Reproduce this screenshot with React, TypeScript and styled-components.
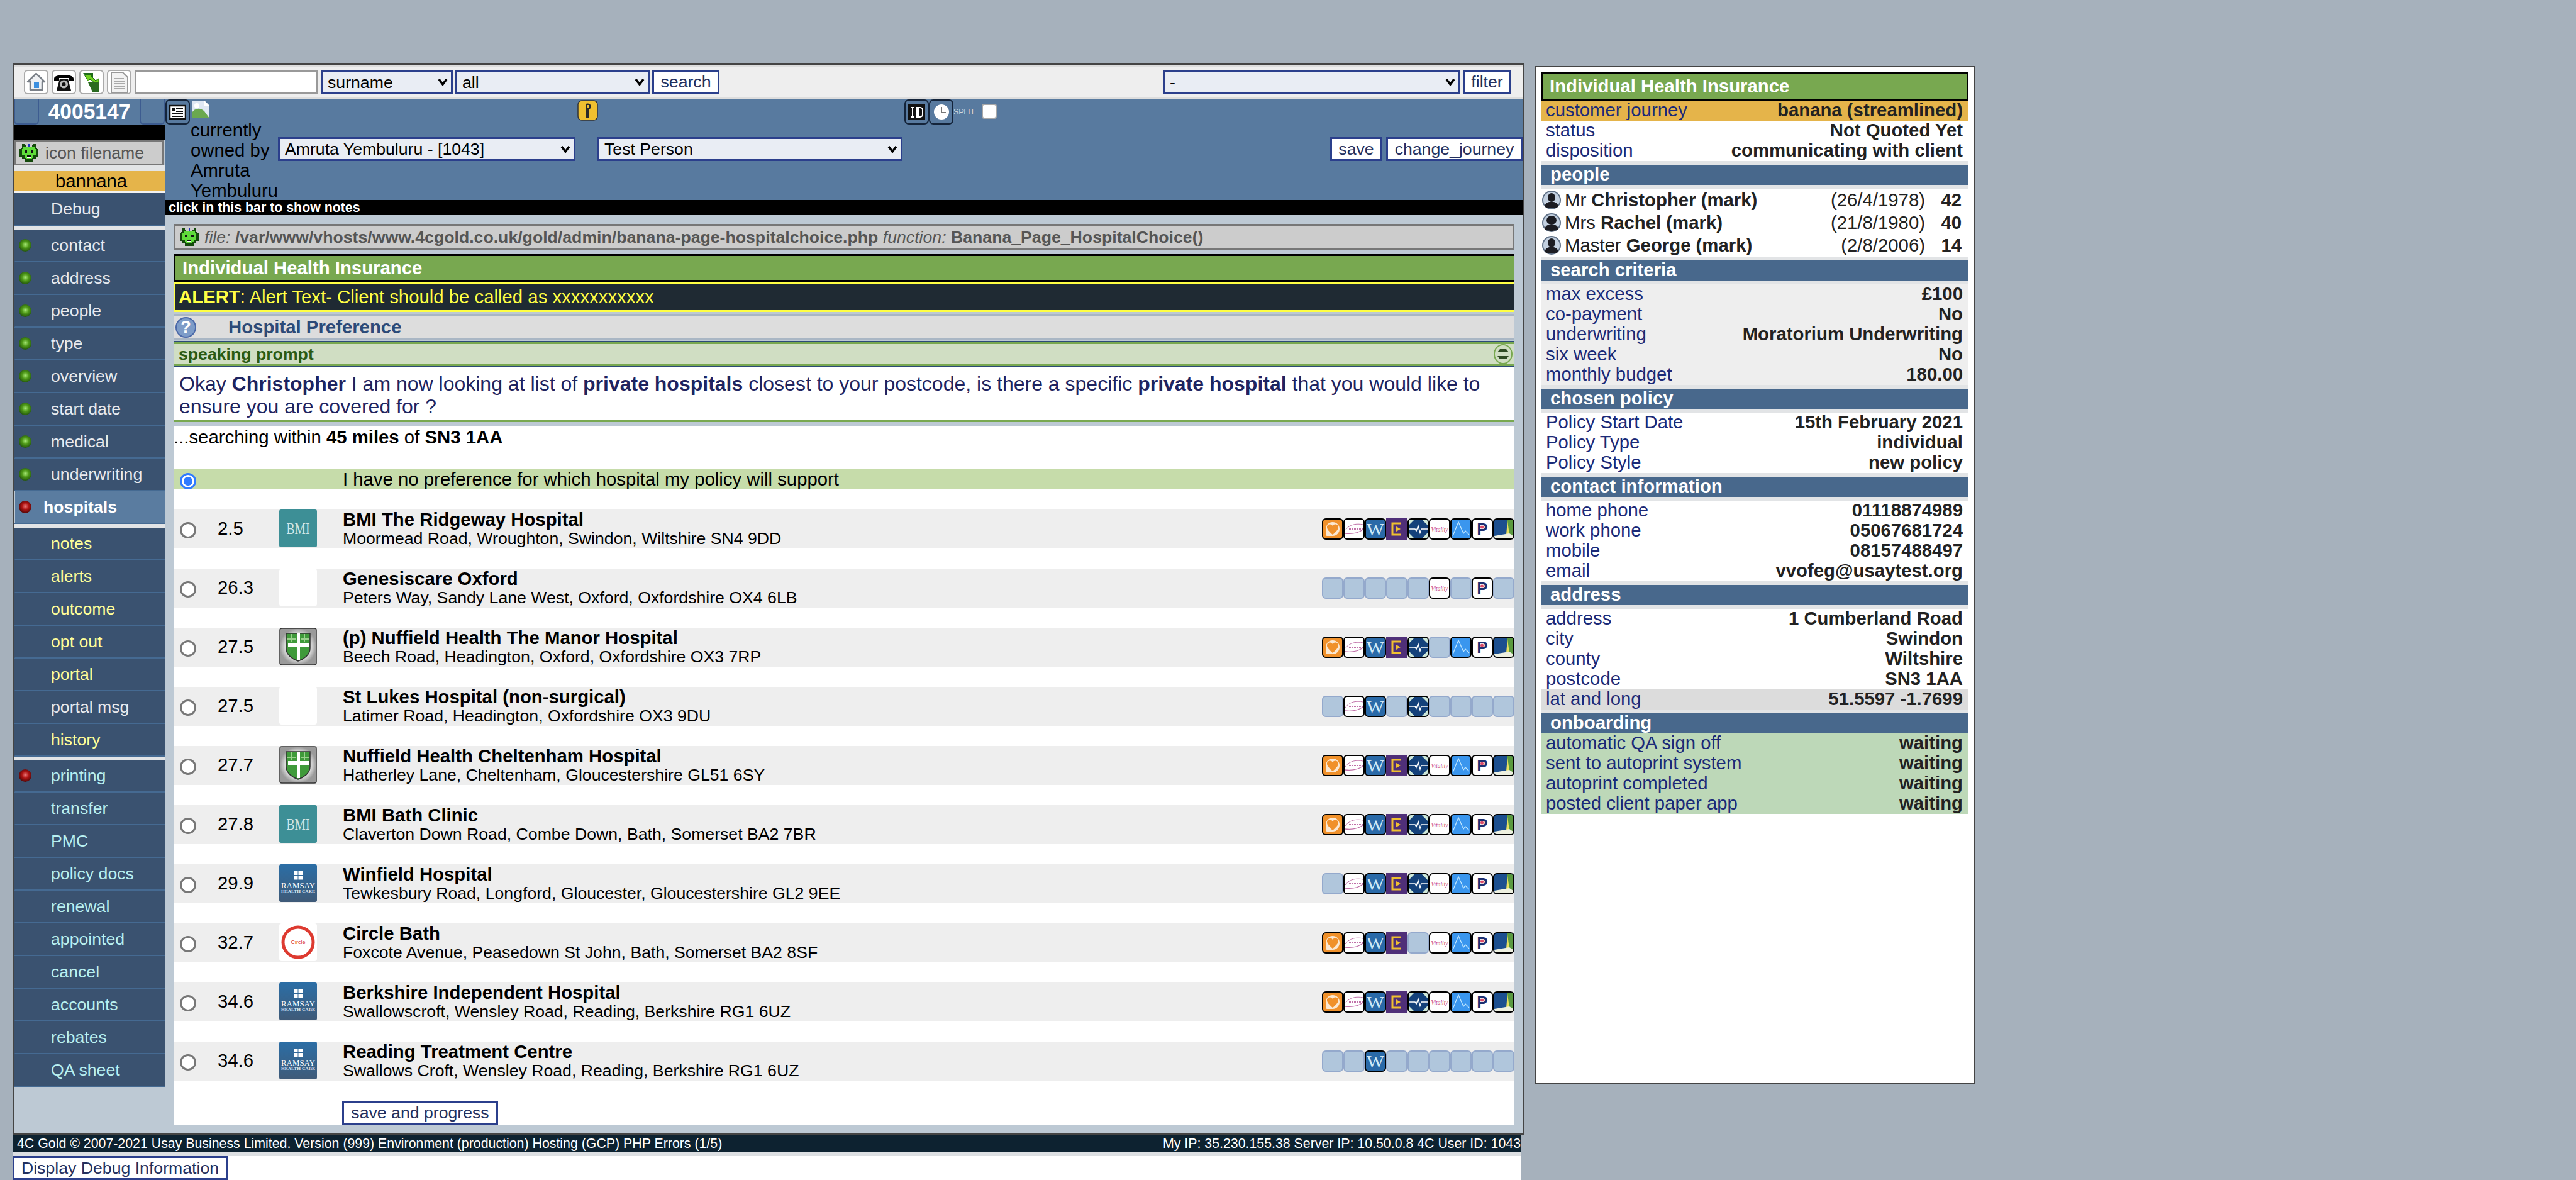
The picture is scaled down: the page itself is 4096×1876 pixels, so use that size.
import * as React from 'react';
import styled, { createGlobalStyle } from 'styled-components';

const palette = {
  page: '#a6b1bc',
  shell: '#bdc9d4',
  band: '#587a9f',
  nav: '#3a5270',
  navLine: '#456a92',
  navy: '#2b3f8c',
  label: '#1b2a78',
  green: '#78a850',
  orange: '#e5b44a',
  stripe: '#e2e4e6',
  head: '#48688c',
};

const chevron =
  "url(\"data:image/svg+xml,%3Csvg xmlns='http://www.w3.org/2000/svg' width='16' height='13'%3E%3Cpath d='M2 2l6 8 6-8' fill='none' stroke='%23000' stroke-width='3.5'/%3E%3C/svg%3E\")";

const GlobalStyle = createGlobalStyle`
  html, body {
    margin: 0;
    padding: 0;
    width: 4096px;
    height: 1876px;
    overflow: hidden;
    background: ${palette.page};
    font-family: "Liberation Sans", Arial, sans-serif;
    font-size: 26.67px;
    color: #000;
  }
  * {
    box-sizing: border-box;
  }
`;

const Page = styled.div`
  display: flex;
  align-items: flex-start;
  width: 4096px;
  height: 1876px;
`;

const MainColumn = styled.div`
  width: 2404px;
  margin-left: 20px;
  padding-top: 100px;
`;

const Shell = styled.div`
  height: 1704px;
  display: flex;
  flex-direction: column;
  background: ${palette.shell};
  border: 2px solid #444;
  border-top-width: 3px;
`;

const Toolbar = styled.div`
  flex: none;
  height: 55px;
  display: flex;
  align-items: center;
  gap: 4px;
  padding: 0 19px 0 16px;
  background: #eee;
  border-top: 4px solid #ddd;
  border-bottom: 4px solid #ddd;
`;

const ToolIcons = styled.div`
  display: flex;
  gap: 5px;
  margin-right: 1px;
`;

const ToolIcon = styled.div`
  width: 39px;
  height: 39px;
  background: #fff;
  border: 2px solid #aaa;
  border-radius: 6px;
  display: flex;
  align-items: center;
  justify-content: center;
`;

const SearchInput = styled.input`
  width: 292px;
  height: 38px;
  background: #fff;
  border: 3px solid #999;
  border-radius: 0;
  outline: none;
`;

const Select = styled.select<{ $width: number }>`
  appearance: none;
  width: ${(p) => p.$width}px;
  height: 38px;
  padding: 0 28px 0 8px;
  font-family: inherit;
  font-size: 26.67px;
  color: #000;
  background: #e9edf4 ${chevron} no-repeat right 5px center;
  border: 3px solid ${palette.navy};
  border-radius: 0;
`;

const Button = styled.button<{ $width: number }>`
  width: ${(p) => p.$width}px;
  height: 38px;
  padding: 0;
  font-family: inherit;
  font-size: 26.67px;
  color: #24305e;
  background: #fff;
  border: 3px solid ${palette.navy};
  border-radius: 0;
`;

const Spacer = styled.div`
  flex: 1;
`;

const Body = styled.div`
  flex: 1;
  display: flex;
  min-height: 0;
`;

const Sidebar = styled.div`
  flex: none;
  width: 240px;
`;

const IdBlock = styled.div`
  height: 40px;
  display: flex;
  align-items: stretch;
  justify-content: space-between;
  background: ${palette.band};
`;

const IdTab = styled.div`
  width: 40px;
  border: 2px solid #3d5c90;
  border-top: 0;
  border-radius: 0 0 6px 6px;
`;

const IdNumber = styled.div`
  align-self: center;
  font-size: 33.6px;
  font-weight: bold;
  line-height: 40px;
  color: #fff;
`;

const BlackStrip = styled.div`
  height: 25px;
  background: #000;
`;

const FilenameBox = styled.div`
  height: 40px;
  margin: 0 1px;
  display: flex;
  align-items: center;
  gap: 9px;
  padding-left: 3px;
  color: #555;
  background: #ccc;
  border: 3px solid #777;
`;

const JourneyBlock = styled.div`
  margin-top: 0;
  border-top: 9px solid ${palette.stripe};
  border-bottom: 3px solid #f2f2f2;
`;

const JourneyName = styled.div`
  height: 32px;
  line-height: 32px;
  padding-left: 66px;
  font-size: 29.33px;
  background: ${palette.orange};
`;

const NavGroup = styled.div<{ $gap: number }>`
  border-bottom: ${(p) => p.$gap}px solid ${palette.stripe};
`;

const NavItem = styled.div<{ $active?: boolean; $color?: string }>`
  height: 52px;
  display: flex;
  align-items: center;
  background: ${(p) => (p.$active ? '#5a7ca0' : palette.nav)};
  border-bottom: 2px solid ${palette.navLine};
  border-left: 2px solid ${(p) => (p.$active ? palette.shell : palette.nav)};
  color: ${(p) => p.$color || '#e8eaee'};
  font-weight: ${(p) => (p.$active ? 'bold' : 'normal')};
`;

const LedSlot = styled.div`
  flex: none;
  width: 20px;
  height: 20px;
  margin-left: 6px;
`;

const Led = styled.div<{ $on: 'green' | 'red' }>`
  width: 20px;
  height: 20px;
  border-radius: 50%;
  background: ${(p) =>
    p.$on === 'green'
      ? 'radial-gradient(circle at 52% 45%, #a8e878 0, #4f9a18 35%, #2c6410 65%, #0e2206 95%)'
      : 'radial-gradient(circle at 52% 45%, #e87878 0, #b01414 35%, #640a0a 65%, #220404 95%)'};
`;

const NavLabel = styled.span<{ $active?: boolean }>`
  margin-left: ${(p) => (p.$active ? 19 : 31)}px;
  line-height: 1;
`;

const MainArea = styled.div`
  flex: 1;
  min-width: 0;
  display: flex;
  flex-direction: column;
`;

const Header = styled.div`
  flex: none;
  height: 160px;
  background: ${palette.band};
  font-size: 29.33px;
`;

const HeaderIcons = styled.div`
  height: 33px;
  display: flex;
  align-items: flex-start;
  padding-left: 1px;
`;

const DarkTile = styled.div<{ $gap?: number }>`
  flex: none;
  width: 39px;
  height: 40px;
  margin-left: ${(p) => p.$gap || 0}px;
  display: flex;
  align-items: center;
  justify-content: center;
  border: 2px solid #14243a;
  border-radius: 7px;
`;

const BrokenImage = styled.svg`
  flex: none;
  margin: 1px 0 0 2px;
`;

const KeyIcon = styled.svg`
  flex: none;
  margin: 1px 0 0 584px;
`;

const SplitLabel = styled.span`
  flex: none;
  width: 35px;
  margin-top: 12px;
  font-size: 13px;
  line-height: 16px;
  color: #d8d8d8;
  letter-spacing: -0.5px;
`;

const SplitCheck = styled.input`
  appearance: none;
  flex: none;
  width: 24px;
  height: 24px;
  margin: 7px 0 0 10px;
  background: #fff;
  border: 2px solid #a8a8a8;
  border-radius: 4px;
`;

const HeaderForm = styled.div`
  display: flex;
  align-items: flex-start;
  padding: 0 1px 0 41px;
`;

const OwnedBy = styled.div`
  flex: none;
  width: 139px;
  line-height: 32px;
`;

const FormControls = styled.div`
  flex: 1;
  display: flex;
  gap: 35px;
  margin-top: 27px;
`;

const FormActions = styled.div`
  display: flex;
  gap: 6px;
  margin-left: auto;
`;

const NotesBar = styled.div`
  flex: none;
  height: 24px;
  padding-left: 6px;
  line-height: 24px;
  font-size: 21.33px;
  font-weight: bold;
  color: #fff;
  background: #000;
`;

const Content = styled.div`
  flex: 1;
  min-height: 0;
  display: flex;
  flex-direction: column;
  padding: 14px 14px 14px;
`;

const FileBar = styled.div`
  flex: none;
  height: 42px;
  display: flex;
  align-items: center;
  gap: 7px;
  padding-left: 5px;
  margin-bottom: 6px;
  color: #555;
  background: #ccc;
  border: 3px solid #777;
  em {
    font-weight: normal;
  }
  span {
    font-weight: bold;
  }
`;

const TitleBar = styled.div`
  flex: none;
  height: 44px;
  line-height: 38px;
  padding-left: 12px;
  font-size: 29.33px;
  font-weight: bold;
  color: #fff;
  background: ${palette.green};
  border: 3px solid #000;
  border-left-width: 2px;
  border-right-width: 1px;
`;

const AlertBar = styled.div`
  flex: none;
  height: 48px;
  line-height: 42px;
  padding-left: 5px;
  margin-bottom: 4px;
  font-size: 29.33px;
  color: #ffff44;
  background: #1f2a33;
  border: 3px solid #ffff44;
  border-right-width: 1px;
`;

const PrefBar = styled.div`
  flex: none;
  height: 40px;
  display: flex;
  align-items: center;
  margin-bottom: 2px;
  font-size: 29.33px;
  font-weight: bold;
  color: #2c4a78;
  background: #ddd;
  border-top: 2px solid #a9b6c4;
  border-bottom: 2px solid #a9b6c4;
`;

const HelpBadge = styled.div`
  flex: none;
  width: 33px;
  height: 33px;
  margin: 0 51px 0 3px;
  display: flex;
  align-items: center;
  justify-content: center;
  font-size: 27px;
  font-weight: bold;
  line-height: 1;
  color: #fff;
  background: #7d9cc8;
  border: 2px solid #4a68a8;
  border-radius: 50%;
`;

const SpeakBar = styled.div`
  flex: none;
  height: 42px;
  display: flex;
  align-items: center;
  justify-content: space-between;
  padding: 0 2px 0 8px;
  font-weight: bold;
  color: #2a5a12;
  background: #d0dec3;
  box-shadow: inset 0 2px 0 #2c4a78, inset 0 5px 0 ${palette.green},
    inset 0 -2px 0 #2c4a78, inset 0 -5px 0 ${palette.green};
`;

const PromptBox = styled.div`
  flex: none;
  height: 87px;
  padding: 8px 8px 0;
  font-size: 32px;
  line-height: 36px;
  color: #1f2460;
  background: #fff;
  border: 1px solid ${palette.green};
  border-top: 0;
  border-bottom-width: 3px;
`;

const ResultsPanel = styled.div`
  flex: 1;
  min-height: 0;
  margin-top: 6px;
  display: flex;
  flex-direction: column;
  background: #fff;
  font-size: 29.33px;
`;

const SearchNote = styled.div`
  height: 36px;
  line-height: 36px;
  margin-bottom: 33px;
`;

const ChoiceGrid = styled.div`
  display: grid;
  grid-template-columns: 70px 98px 60px 41px minmax(0, 1fr) auto;
`;

const NoPreference = styled(ChoiceGrid)`
  height: 32px;
  line-height: 32px;
  margin-bottom: 32px;
  background: #c6dcaa;
`;

const HospitalList = styled.div`
  display: flex;
  flex-direction: column;
  gap: 32px;
`;

const HospitalRow = styled(ChoiceGrid)`
  height: 62px;
  background: #eee;
`;

const Radio = styled.input`
  appearance: none;
  width: 26px;
  height: 26px;
  margin: 20px 0 0 10px;
  background: #fff;
  border: 3px solid #777;
  border-radius: 50%;
  &:checked {
    background: radial-gradient(circle, #2f7bff 0 6.5px, #fff 7.5px);
    border-color: #2f7bff;
  }
`;

const NoPrefRadio = styled(Radio)`
  margin-top: 6px;
`;

const Distance = styled.div`
  line-height: 60px;
`;

const NoPrefLabel = styled.div`
  grid-column: 5;
`;

const HospitalText = styled.div`
  grid-column: 5;
  line-height: 31px;
  b {
    display: block;
    white-space: nowrap;
  }
  span {
    display: block;
    font-size: 26.67px;
    white-space: nowrap;
  }
`;

const LogoBox = styled.svg`
  display: block;
  grid-column: 3;
`;

const Providers = styled.div`
  grid-column: 6;
  display: flex;
  align-items: center;
`;

const Tile = styled.div<{ $bg: string; $off?: boolean; $square?: boolean }>`
  width: 34px;
  height: 34px;
  overflow: hidden;
  background: ${(p) => (p.$off ? '#b0c6dc' : p.$bg)};
  border: ${(p) => (p.$square ? '0' : `2px solid ${p.$off ? '#94a9cc' : '#000'}`)};
  border-radius: ${(p) => (p.$square ? '0' : '6px')};
  svg {
    display: block;
    width: 100%;
    height: 100%;
  }
`;

const ProgressWrap = styled.div`
  margin: 32px 0 0 268px;
`;

const ProgressButton = styled(Button)`
  display: block;
`;

const BottomArea = styled.div`
  width: 2399px;
  height: 72px;
  background: #fff;
`;

const Footer = styled.div`
  height: 28px;
  display: flex;
  justify-content: space-between;
  padding: 0 1px 0 7px;
  font-size: 21.33px;
  line-height: 28px;
  color: #fff;
  background: #0d2230;
`;

const FooterEdge = styled.div`
  height: 6px;
  background: #dcdfe2;
`;

const DebugButton = styled(Button)`
  display: block;
  height: 38px;
`;

const SidePanel = styled.div`
  flex: none;
  width: 700px;
  height: 1619px;
  margin: 105px 0 0 16px;
  padding: 8px;
  background: #fff;
  border: 2px solid #444;
  font-size: 29.33px;
`;

const SideTitle = styled.div`
  height: 45px;
  line-height: 38px;
  padding-left: 11px;
  font-weight: bold;
  color: #fff;
  background: ${palette.green};
  border: 3px solid #000;
`;

const InfoRow = styled.div<{ $bg?: string }>`
  height: 32px;
  display: flex;
  justify-content: space-between;
  padding: 0 9px 0 8px;
  line-height: 30px;
  color: ${palette.label};
  background: ${(p) => p.$bg || 'transparent'};
  b {
    color: #222;
  }
`;

const SectionHead = styled.div`
  height: 44px;
  line-height: 30px;
  padding-left: 15px;
  font-weight: bold;
  color: #fff;
  background: ${palette.head};
  border-top: 6px solid ${palette.stripe};
  border-bottom: 6px solid ${palette.stripe};
`;

const OnboardingHead = styled(SectionHead)`
  height: 38px;
  border-bottom: 0;
`;

const RowGroup = styled.div<{ $bg: string }>`
  background: ${(p) => p.$bg};
`;

const PersonRow = styled.div`
  height: 36px;
  display: grid;
  grid-template-columns: 32px minmax(0, 1fr) auto 58px;
  align-items: center;
  padding: 0 11px 0 2px;
  color: #222;
`;

const PersonAge = styled.b`
  text-align: right;
`;

const PersonName = styled.span`
  margin-left: 4px;
`;

const Alien: React.FC = () => (
  <svg width="34" height="28" viewBox="0 0 17 14" shapeRendering="crispEdges">
    <path
      fill="#144a0c"
      d="M3 0h2v1h1v1h5V1h1V0h2v3h1v1h1v6h-2v2h-2v2H5v-2H3v-2H1V4h1V3h1z"
    />
    <path fill="#5fdc3a" d="M4 2h9v2h1v5h-2v2h-1v1H6v-1H5V9H3V4h1z" />
    <path fill="#111" d="M5 5h2v2H5zM10 5h2v2h-2zM7 9h3v2H7z" />
    <path fill="#fff" d="M7 10h3v1H7z" />
    <path fill="#2233bb" d="M8 0h1v2H8z" />
  </svg>
);

const HomeIcon: React.FC = () => (
  <svg width="33" height="33" viewBox="0 0 33 33">
    <path d="M16.5 3 3 16h4v13h19V16h4z" fill="#eef0f3" stroke="#7a8088" strokeWidth="2.5" strokeLinejoin="round" />
    <rect x="13" y="16" width="8" height="10" fill="#3b8fe0" />
  </svg>
);

const PhoneIcon: React.FC = () => (
  <svg width="35" height="33" viewBox="0 0 35 33">
    <path d="M2 11c0-8 31-8 31 0v3h-8v-4H10v4H2z" fill="#000" />
    <path d="M11 11h13l5 19H6z" fill="#111" />
    <circle cx="17.5" cy="20" r="6.5" fill="#bbb" />
    <circle cx="17.5" cy="20" r="3" fill="#111" />
  </svg>
);

const ReturnIcon: React.FC = () => (
  <svg width="33" height="35" viewBox="0 0 33 35">
    <path d="M3 3h16v11h-6z" fill="#1f6a1a" />
    <path d="M5 6h9l9 9 5-3v10H17l4-4-7-5-3 3z" fill="#6fd020" stroke="#1f6a1a" />
    <path d="M11 18h17v15H18z" fill="#2a6a20" />
  </svg>
);

const PageIcon: React.FC = () => (
  <svg width="31" height="34" viewBox="0 0 31 34">
    <path d="M3 1h18l8 8v24H3z" fill="#f2f2f2" stroke="#999" strokeWidth="2" />
    <path d="M7 11h16M7 15h18M7 19h18M7 23h18M7 27h18" stroke="#aaa" strokeWidth="2" />
  </svg>
);

const CardIcon: React.FC = () => (
  <svg width="27" height="27" viewBox="0 0 27 27">
    <rect x="1" y="3" width="25" height="21" fill="#fff" stroke="#111" strokeWidth="2.5" />
    <rect x="5" y="7" width="4" height="4" fill="#111" />
    <path d="M11 8h11M11 12h11M5 16h17M5 20h17" stroke="#111" strokeWidth="2" />
  </svg>
);

const IdIcon: React.FC = () => (
  <svg width="27" height="25" viewBox="0 0 27 25">
    <rect width="27" height="25" fill="#111" />
    <path d="M4 5h6M7 5v15M4 20h6M14 5h5a4 4 0 0 1 4 4v7a4 4 0 0 1-4 4h-5zM16 5v15" fill="none" stroke="#fff" strokeWidth="2" />
  </svg>
);

const ClockIcon: React.FC = () => (
  <svg width="26" height="26" viewBox="0 0 26 26">
    <circle cx="13" cy="13" r="12" fill="#fff" />
    <path d="M13 5v9h7" fill="none" stroke="#777" strokeWidth="2" />
  </svg>
);

const PersonIcon: React.FC<{ $hair?: boolean }> = ({ $hair }) => (
  <svg width="30" height="30" viewBox="0 0 30 30">
    <circle cx="15" cy="15" r="14" fill="#c3d0e0" stroke="#5f7086" strokeWidth="2" />
    <ellipse cx="15" cy="11" rx={$hair ? 8 : 6} ry="7" fill="#1c1c22" />
    <path d="M4 25c2-7 7-7 11-7s9 0 11 7c-3 4-19 4-22 0z" fill="#1c1c22" />
  </svg>
);

const CollapseIcon: React.FC = () => (
  <svg width="32" height="34" viewBox="0 0 32 34">
    <ellipse cx="16" cy="17" rx="14" ry="15" fill="#d0dec3" stroke="#78a850" strokeWidth="2" />
    <path d="M7 14l4-5h10l4 5zM7 20l4 5h10l4-5z" fill="#2e4a22" />
  </svg>
);

type LogoKind = 'bmi' | 'blank' | 'nuffield' | 'ramsay' | 'circle';

const Logo: React.FC<{ kind: LogoKind }> = ({ kind }) => {
  const id = React.useId();
  return (
    <LogoBox width="60" height="60" viewBox="0 0 60 60">
      {kind === 'bmi' && (
        <>
          <rect width="60" height="60" rx="3" fill="#3d8f96" />
          <text
            x="30"
            y="39"
            textAnchor="middle"
            fontFamily="Liberation Serif"
            fontSize="26"
            textLength="37"
            lengthAdjust="spacingAndGlyphs"
            fill="#cfe6e6"
          >
            BMI
          </text>
        </>
      )}
      {kind === 'blank' && <rect width="60" height="60" rx="4" fill="#fff" />}
      {kind === 'nuffield' && (
        <>
          <defs>
            <radialGradient id={id}>
              <stop offset="0.6" stopColor="#f4f4f4" />
              <stop offset="1" stopColor="#9a9a9a" />
            </radialGradient>
          </defs>
          <rect x="1" y="1" width="58" height="58" rx="3" fill={`url(#${id})`} stroke="#333" strokeWidth="1.5" />
          <path d="M11 9h38v24c0 10-10 17-19 20-9-3-19-10-19-20z" fill="#3f9a3a" stroke="#333" strokeWidth="1.5" />
          <path d="M14 24h14v-15h5v15h14v6H33v21h-5V30H14z" fill="#fff" />
          <path d="M20 10v13M40 10v13M13 18h14M34 18h13" stroke="#9ad08c" strokeWidth="2" />
        </>
      )}
      {kind === 'ramsay' && (
        <>
          <defs>
            <linearGradient id={id} x1="0" y1="0" x2="0" y2="1">
              <stop offset="0" stopColor="#2b6ea6" />
              <stop offset="1" stopColor="#3f5a78" />
            </linearGradient>
          </defs>
          <rect width="60" height="60" rx="3" fill={`url(#${id})`} />
          <path d="M23 11h6.500v6h-6.500zM30.500 11h6.500v6h-6.500zM23 18h6.500v6.500h-6.500zM30.500 18h6.500v6.500h-6.500z" fill="#fff" />
          <text
            x="30"
            y="38"
            textAnchor="middle"
            fontFamily="Liberation Serif"
            fontSize="12.500"
            textLength="54"
            lengthAdjust="spacingAndGlyphs"
            fill="#fff"
          >
            RAMSAY
          </text>
          <text
            x="30"
            y="45"
            textAnchor="middle"
            fontFamily="Liberation Serif"
            fontSize="7"
            fontWeight="bold"
            textLength="54"
            lengthAdjust="spacingAndGlyphs"
            fill="#dfe8f0"
          >
            HEALTH CARE
          </text>
        </>
      )}
      {kind === 'circle' && (
        <>
          <rect width="60" height="60" rx="4" fill="#fff" />
          <circle cx="30" cy="30" r="24" fill="none" stroke="#dd3a30" strokeWidth="5" />
          <text x="30" y="33" textAnchor="middle" fontFamily="Liberation Sans" fontSize="9" fill="#dd3a30">
            Circle
          </text>
        </>
      )}
    </LogoBox>
  );
};

type Provider = 'heart' | 'swoosh' | 'wave' | 'exit' | 'pulse' | 'vitality' | 'peak' | 'pru' | 'bar';

const providerOrder: Provider[] = ['heart', 'swoosh', 'wave', 'exit', 'pulse', 'vitality', 'peak', 'pru', 'bar'];

const providerBg: Record<Provider, string> = {
  heart: '#f0912b',
  swoosh: '#fff',
  wave: '#2a6aa8',
  exit: '#4f2f78',
  pulse: '#14417a',
  vitality: '#fff',
  peak: '#3a96ee',
  pru: '#fff',
  bar: '#1c4f8f',
};

const ProviderArt: React.FC<{ kind: Provider }> = ({ kind }) => {
  switch (kind) {
    case 'heart':
      return (
        <svg viewBox="0 0 30 30">
          <path d="M4 15a11 11 0 1 1 11 11H6a2 2 0 0 1-2-2z" fill="#fbe8d2" />
          <path d="M15 24C8 18 6 15 6 12c0-5 7-6 9-2 2-4 9-3 9 2 0 3-2 6-9 12z" fill="#f0912b" />
        </svg>
      );
    case 'swoosh':
      return (
        <svg viewBox="0 0 30 30" fill="none" stroke="#c070a8">
          <path d="M1 17C8 7 20 6 29 8" strokeWidth="1" />
          <path d="M7 15h22" strokeWidth="2" strokeDasharray="3 1" />
          <path d="M1 22c9 1 20 0 28-6" strokeWidth="1.3" />
        </svg>
      );
    case 'wave':
      return (
        <svg viewBox="0 0 30 30">
          <text x="15" y="25" textAnchor="middle" fontFamily="Liberation Serif" fontSize="27" textLength="28" lengthAdjust="spacingAndGlyphs" fill="#cfe8f5">
            W
          </text>
        </svg>
      );
    case 'exit':
      return (
        <svg viewBox="0 0 34 34">
          <path d="M24 8H10v18h14" fill="none" stroke="#f0c030" strokeWidth="3" />
          <path d="M16 13l7 4-7 4z" fill="#f0c030" />
        </svg>
      );
    case 'pulse':
      return (
        <svg viewBox="0 0 30 30">
          <path d="M0 0h9L0 9zM30 0h-9l9 9zM0 30h9l-9-9zM30 30h-9l9-9z" fill="#cfe8d8" />
          <path d="M0 15h10l2 3 3-8 3 11 2-6h10" fill="none" stroke="#fff" strokeWidth="1.5" />
        </svg>
      );
    case 'vitality':
      return (
        <svg viewBox="0 0 30 30">
          <text
            x="15"
            y="19"
            textAnchor="middle"
            fontFamily="Liberation Serif"
            fontStyle="italic"
            fontSize="10"
            textLength="27"
            lengthAdjust="spacingAndGlyphs"
            fill="#c8447c"
          >
            Vitality
          </text>
        </svg>
      );
    case 'peak':
      return (
        <svg viewBox="0 0 30 30">
          <path d="M2 26 11 4l8 18 3-4 6 6" fill="none" stroke="#bfe6ff" strokeWidth="1.3" />
        </svg>
      );
    case 'pru':
      return (
        <svg viewBox="0 0 30 30">
          <text x="15" y="24" textAnchor="middle" fontFamily="Liberation Sans" fontWeight="bold" fontSize="26" fill="#1c2f70">
            P
          </text>
          <circle cx="14.500" cy="12" r="2.500" fill="#d84a6a" />
        </svg>
      );
    case 'bar':
      return (
        <svg viewBox="0 0 30 30">
          <path d="M21 0h9v30h-9z" fill="#5a9a40" />
          <path d="M21 2l3 22h-5z" fill="#e8e060" />
          <path d="M0 30v-4l24-4 6 4v4z" fill="#eef0e0" />
        </svg>
      );
  }
};

const ProviderTile: React.FC<{ kind: Provider; on: boolean }> = ({ kind, on }) => (
  <Tile $bg={providerBg[kind]} $off={!on} $square={on && kind === 'exit'}>
    {on && <ProviderArt kind={kind} />}
  </Tile>
);

const hospitals: { km: string; logo: LogoKind; name: string; address: string; mask: string }[] = [
  { km: '2.5', logo: 'bmi', name: 'BMI The Ridgeway Hospital', address: 'Moormead Road, Wroughton, Swindon, Wiltshire SN4 9DD', mask: '111111111' },
  { km: '26.3', logo: 'blank', name: 'Genesiscare Oxford', address: 'Peters Way, Sandy Lane West, Oxford, Oxfordshire OX4 6LB', mask: '000001010' },
  { km: '27.5', logo: 'nuffield', name: '(p) Nuffield Health The Manor Hospital', address: 'Beech Road, Headington, Oxford, Oxfordshire OX3 7RP', mask: '111110111' },
  { km: '27.5', logo: 'blank', name: 'St Lukes Hospital (non-surgical)', address: 'Latimer Road, Headington, Oxfordshire OX3 9DU', mask: '011010000' },
  { km: '27.7', logo: 'nuffield', name: 'Nuffield Health Cheltenham Hospital', address: 'Hatherley Lane, Cheltenham, Gloucestershire GL51 6SY', mask: '111111111' },
  { km: '27.8', logo: 'bmi', name: 'BMI Bath Clinic', address: 'Claverton Down Road, Combe Down, Bath, Somerset BA2 7BR', mask: '111111111' },
  { km: '29.9', logo: 'ramsay', name: 'Winfield Hospital', address: 'Tewkesbury Road, Longford, Gloucester, Gloucestershire GL2 9EE', mask: '011111111' },
  { km: '32.7', logo: 'circle', name: 'Circle Bath', address: 'Foxcote Avenue, Peasedown St John, Bath, Somerset BA2 8SF', mask: '111101111' },
  { km: '34.6', logo: 'ramsay', name: 'Berkshire Independent Hospital', address: 'Swallowscroft, Wensley Road, Reading, Berkshire RG1 6UZ', mask: '111111111' },
  { km: '34.6', logo: 'ramsay', name: 'Reading Treatment Centre', address: 'Swallows Croft, Wensley Road, Reading, Berkshire RG1 6UZ', mask: '001000000' },
];

type NavEntry = { label: string; led?: 'green' | 'red'; color?: string; active?: boolean };

const yellow = '#ffff99';
const cyan = '#b8f0f0';

const navGroups: { gap: number; items: NavEntry[] }[] = [
  {
    gap: 6,
    items: [
      { label: 'contact', led: 'green' },
      { label: 'address', led: 'green' },
      { label: 'people', led: 'green' },
      { label: 'type', led: 'green' },
      { label: 'overview', led: 'green' },
      { label: 'start date', led: 'green' },
      { label: 'medical', led: 'green' },
      { label: 'underwriting', led: 'green' },
      { label: 'hospitals', led: 'red', color: '#fff', active: true },
    ],
  },
  {
    gap: 5,
    items: [
      { label: 'notes', color: yellow },
      { label: 'alerts', color: yellow },
      { label: 'outcome', color: yellow },
      { label: 'opt out', color: yellow },
      { label: 'portal', color: yellow },
      { label: 'portal msg' },
      { label: 'history', color: yellow },
    ],
  },
  {
    gap: 0,
    items: [
      { label: 'printing', led: 'red', color: cyan },
      { label: 'transfer', color: cyan },
      { label: 'PMC', color: cyan },
      { label: 'policy docs', color: cyan },
      { label: 'renewal', color: cyan },
      { label: 'appointed', color: cyan },
      { label: 'cancel', color: cyan },
      { label: 'accounts', color: cyan },
      { label: 'rebates', color: cyan },
      { label: 'QA sheet', color: cyan },
    ],
  },
];

const renderNavItem = (item: NavEntry) => (
  <NavItem key={item.label} $active={item.active} $color={item.color}>
    <LedSlot>{item.led && <Led $on={item.led} />}</LedSlot>
    <NavLabel $active={item.active}>{item.label}</NavLabel>
  </NavItem>
);

const infoSections: { title: string; bg: string; rows: [string, string][] }[] = [
  {
    title: 'search criteria',
    bg: '#eee',
    rows: [
      ['max excess', '£100'],
      ['co-payment', 'No'],
      ['underwriting', 'Moratorium Underwriting'],
      ['six week', 'No'],
      ['monthly budget', '180.00'],
    ],
  },
  {
    title: 'chosen policy',
    bg: '#fff',
    rows: [
      ['Policy Start Date', '15th February 2021'],
      ['Policy Type', 'individual'],
      ['Policy Style', 'new policy'],
    ],
  },
  {
    title: 'contact information',
    bg: '#fff',
    rows: [
      ['home phone', '01118874989'],
      ['work phone', '05067681724'],
      ['mobile', '08157488497'],
      ['email', 'vvofeg@usaytest.org'],
    ],
  },
];

const renderRows = (rows: [string, string][]) =>
  rows.map(([label, value]) => (
    <InfoRow key={label}>
      <span>{label}</span>
      <b>{value}</b>
    </InfoRow>
  ));

const App: React.FC = () => {
  return (
    <Page>
      <GlobalStyle />
      <MainColumn>
        <Shell>
          <Toolbar>
            <ToolIcons>
              <ToolIcon><HomeIcon /></ToolIcon>
              <ToolIcon><PhoneIcon /></ToolIcon>
              <ToolIcon><ReturnIcon /></ToolIcon>
              <ToolIcon><PageIcon /></ToolIcon>
            </ToolIcons>
            <SearchInput type="text" />
            <Select $width={210} defaultValue="surname">
              <option>surname</option>
            </Select>
            <Select $width={309} defaultValue="all">
              <option>all</option>
            </Select>
            <Button $width={107}>search</Button>
            <Spacer />
            <Select $width={473} defaultValue="-">
              <option>-</option>
            </Select>
            <Button $width={77}>filter</Button>
          </Toolbar>
          <Body>
            <Sidebar>
              <IdBlock>
                <IdTab />
                <IdNumber>4005147</IdNumber>
                <IdTab />
              </IdBlock>
              <BlackStrip />
              <FilenameBox>
                <Alien />
                <span>icon filename</span>
              </FilenameBox>
              <JourneyBlock>
                <JourneyName>bannana</JourneyName>
              </JourneyBlock>
              <NavGroup $gap={6}>{renderNavItem({ label: 'Debug' })}</NavGroup>
              {navGroups.map((group) => (
                <NavGroup key={group.items[0].label} $gap={group.gap}>
                  {group.items.map(renderNavItem)}
                </NavGroup>
              ))}
            </Sidebar>
            <MainArea>
              <Header>
                <HeaderIcons>
                  <DarkTile><CardIcon /></DarkTile>
                  <BrokenImage width="30" height="30" viewBox="0 0 30 30">
                    <path d="M1 1h20l8 8v20H1z" fill="#dfe8f4" />
                    <path d="M21 1l8 8h-8z" fill="#fff" />
                    <path d="M1 29V20c6-8 14-8 20-2l8 11z" fill="#6aa84f" />
                    <circle cx="9" cy="9" r="4" fill="#fff" />
                  </BrokenImage>
                  <KeyIcon width="33" height="33" viewBox="0 0 33 33">
                    <rect x="1" y="1" width="31" height="31" rx="6" fill="#f0c030" stroke="#333" strokeWidth="1.5" />
                    <path d="M14 6c6-2 9 3 7 7l-2 2v13h-6V15z" fill="#2a2a2a" />
                    <path d="M15 8h3v4h-3z" fill="#f0c030" />
                  </KeyIcon>
                  <DarkTile $gap={487}><IdIcon /></DarkTile>
                  <DarkTile><ClockIcon /></DarkTile>
                  <SplitLabel>SPLIT</SplitLabel>
                  <SplitCheck type="checkbox" />
                </HeaderIcons>
                <HeaderForm>
                  <OwnedBy>currently owned by Amruta Yembuluru</OwnedBy>
                  <FormControls>
                    <Select $width={473} defaultValue="amruta">
                      <option value="amruta">Amruta Yembuluru - [1043]</option>
                    </Select>
                    <Select $width={485} defaultValue="test">
                      <option value="test">Test Person</option>
                    </Select>
                    <FormActions>
                      <Button $width={83}>save</Button>
                      <Button $width={217}>change_journey</Button>
                    </FormActions>
                  </FormControls>
                </HeaderForm>
              </Header>
              <NotesBar>click in this bar to show notes</NotesBar>
              <Content>
                <FileBar>
                  <Alien />
                  <div>
                    <em>file:</em> <span>/var/www/vhosts/www.4cgold.co.uk/gold/admin/banana-page-hospitalchoice.php</span>{' '}
                    <em>function:</em> <span>Banana_Page_HospitalChoice()</span>
                  </div>
                </FileBar>
                <TitleBar>Individual Health Insurance</TitleBar>
                <AlertBar>
                  <b>ALERT</b>: Alert Text- Client should be called as xxxxxxxxxxx
                </AlertBar>
                <PrefBar>
                  <HelpBadge>?</HelpBadge>
                  Hospital Preference
                </PrefBar>
                <SpeakBar>
                  speaking prompt
                  <CollapseIcon />
                </SpeakBar>
                <PromptBox>
                  Okay <b>Christopher</b> I am now looking at list of <b>private hospitals</b> closest to your postcode,
                  is there a specific <b>private hospital</b> that you would like to ensure you are covered for ?
                </PromptBox>
                <ResultsPanel>
                  <SearchNote>
                    ...searching within <b>45 miles</b> of <b>SN3 1AA</b>
                  </SearchNote>
                  <NoPreference>
                    <NoPrefRadio type="radio" name="hospital" defaultChecked />
                    <NoPrefLabel>I have no preference for which hospital my policy will support</NoPrefLabel>
                  </NoPreference>
                  <HospitalList>
                    {hospitals.map((h) => (
                      <HospitalRow key={h.name}>
                        <Radio type="radio" name="hospital" />
                        <Distance>{h.km}</Distance>
                        <Logo kind={h.logo} />
                        <HospitalText>
                          <b>{h.name}</b>
                          <span>{h.address}</span>
                        </HospitalText>
                        <Providers>
                          {providerOrder.map((kind, i) => (
                            <ProviderTile key={kind} kind={kind} on={h.mask[i] === '1'} />
                          ))}
                        </Providers>
                      </HospitalRow>
                    ))}
                  </HospitalList>
                  <ProgressWrap>
                    <ProgressButton $width={248}>save and progress</ProgressButton>
                  </ProgressWrap>
                </ResultsPanel>
              </Content>
            </MainArea>
          </Body>
        </Shell>
        <BottomArea>
          <Footer>
            <span>4C Gold © 2007-2021 Usay Business Limited. Version (999) Environment (production) Hosting (GCP) PHP Errors (1/5)</span>
            <span>My IP: 35.230.155.38 Server IP: 10.50.0.8 4C User ID: 1043</span>
          </Footer>
          <FooterEdge />
          <DebugButton $width={342}>Display Debug Information</DebugButton>
        </BottomArea>
      </MainColumn>
      <SidePanel>
        <SideTitle>Individual Health Insurance</SideTitle>
        <InfoRow $bg={palette.orange}>
          <span>customer journey</span>
          <b>banana (streamlined)</b>
        </InfoRow>
        {renderRows([
          ['status', 'Not Quoted Yet'],
          ['disposition', 'communicating with client'],
        ])}
        <SectionHead>people</SectionHead>
        <PersonRow>
          <PersonIcon />
          <PersonName>Mr <b>Christopher (mark)</b></PersonName>
          <span>(26/4/1978)</span>
          <PersonAge>42</PersonAge>
        </PersonRow>
        <PersonRow>
          <PersonIcon $hair />
          <PersonName>Mrs <b>Rachel (mark)</b></PersonName>
          <span>(21/8/1980)</span>
          <PersonAge>40</PersonAge>
        </PersonRow>
        <PersonRow>
          <PersonIcon />
          <PersonName>Master <b>George (mark)</b></PersonName>
          <span>(2/8/2006)</span>
          <PersonAge>14</PersonAge>
        </PersonRow>
        {infoSections.map((section) => (
          <React.Fragment key={section.title}>
            <SectionHead>{section.title}</SectionHead>
            <RowGroup $bg={section.bg}>{renderRows(section.rows)}</RowGroup>
          </React.Fragment>
        ))}
        <SectionHead>address</SectionHead>
        {renderRows([
          ['address', '1 Cumberland Road'],
          ['city', 'Swindon'],
          ['county', 'Wiltshire'],
          ['postcode', 'SN3 1AA'],
        ])}
        <InfoRow $bg="#dcdcdc">
          <span>lat and long</span>
          <b>51.5597 -1.7699</b>
        </InfoRow>
        <OnboardingHead>onboarding</OnboardingHead>
        <RowGroup $bg="#bdd8b8">
          {renderRows([
            ['automatic QA sign off', 'waiting'],
            ['sent to autoprint system', 'waiting'],
            ['autoprint completed', 'waiting'],
            ['posted client paper app', 'waiting'],
          ])}
        </RowGroup>
      </SidePanel>
    </Page>
  );
};

export default App;
